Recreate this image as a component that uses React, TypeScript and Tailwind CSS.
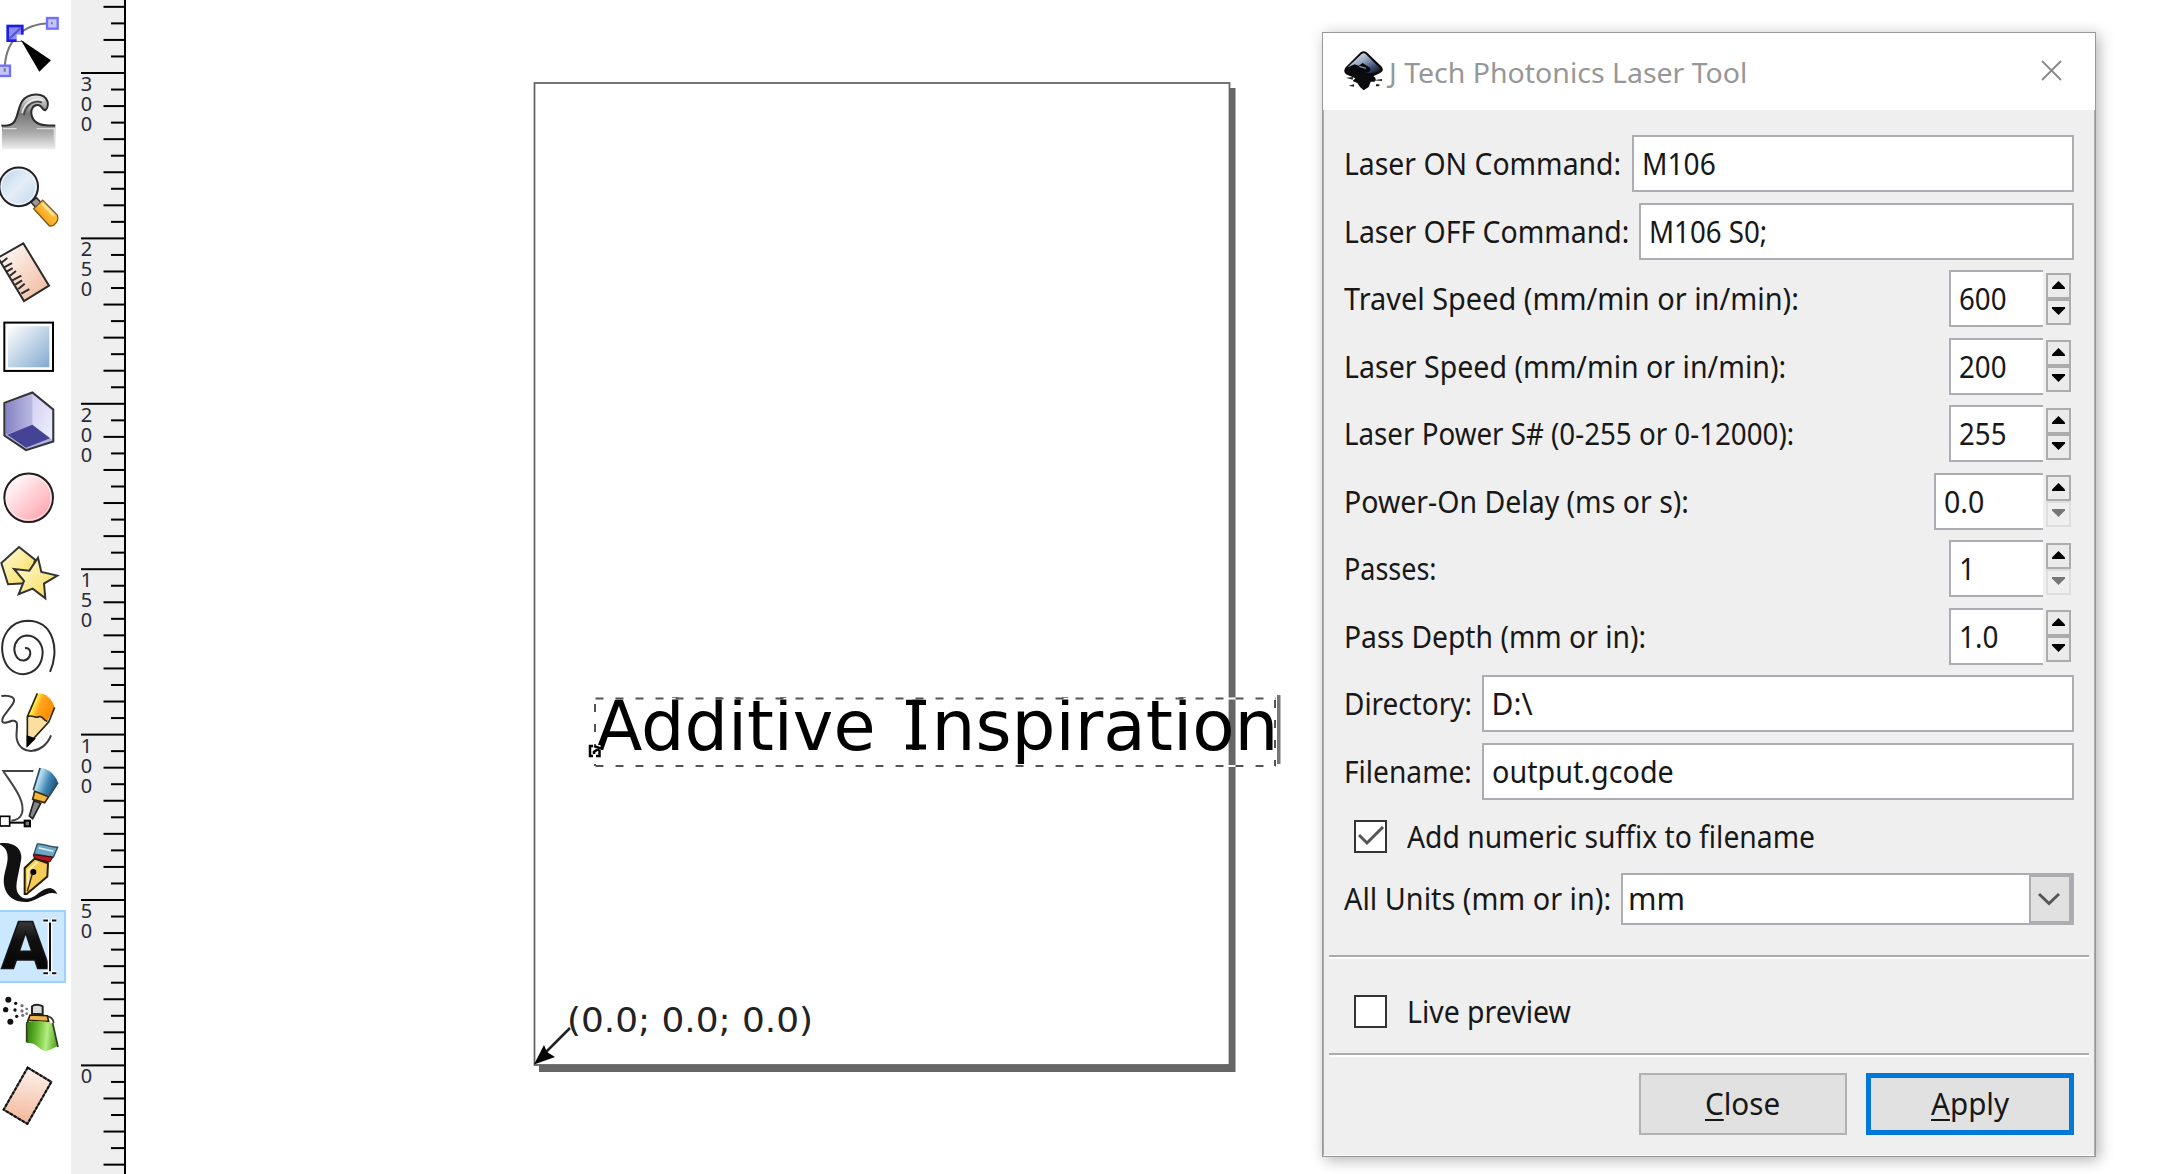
import { ReactNode, useLayoutEffect, useRef, useState } from "react";

/* Text squeezed or stretched horizontally to an exact width. */
function Fit({ w, children, className = "" }: { w: number; children: ReactNode; className?: string }) {
  const ref = useRef<HTMLSpanElement>(null);
  const [k, setK] = useState(1);
  useLayoutEffect(() => {
    if (ref.current) setK(w / ref.current.offsetWidth);
  }, [w]);
  return (
    <span className={"block shrink-0 whitespace-nowrap " + className} style={{ width: w }}>
      <span ref={ref} className="inline-block origin-left" style={{ transform: `scaleX(${k})` }}>
        {children}
      </span>
    </span>
  );
}

const icons: ReactNode[] = [
  // node editor
  <g>
    <path d="M14 212C14 128 62 70 155 70" fill="none" stroke="#777" strokeWidth="6" />
    <rect x="23" y="78" width="44" height="44" fill="#8c8cff" stroke="#1c1cea" strokeWidth="8" />
    <path d="M28 116L62 84" stroke="#5555c8" strokeWidth="6" />
    <path d="M50 124V104H72V124Z" fill="#fff" />
    <rect x="141" y="54" width="32" height="32" fill="#c4c4ff" stroke="#7070ff" strokeWidth="7" />
    <rect x="-4" y="197" width="34" height="31" fill="#c4c4ff" stroke="#7070ff" strokeWidth="7" />
    <path d="M153 70H158M14 205V215" stroke="#777" strokeWidth="6" />
    <path d="M62 119L153 181L118 215Z" fill="#000" />
  </g>,
  // tweak
  <g>
    <defs>
      <linearGradient id="wave" x1="0" y1="0" x2="0" y2="1">
        <stop offset="0" stopColor="#eee" />
        <stop offset=".35" stopColor="#777" />
        <stop offset=".7" stopColor="#aaa" />
        <stop offset="1" stopColor="#eee" />
      </linearGradient>
    </defs>
    <path d="M6 378C60 382 45 340 66 305C84 278 134 276 143 306C145 320 142 326 138 328C130 334 124 322 118 318C100 312 92 330 96 348C100 372 130 378 166 378V448H6Z" fill="url(#wave)" />
    <path d="M4 377C60 382 45 340 66 305C84 278 134 276 143 306C145 322 142 326 136 331C128 332 127 319 117 316C98 312 90 332 96 350C104 374 130 378 166 377" fill="none" stroke="#2d2d2d" strokeWidth="6" />
    <path d="M66 340C74 302 108 292 130 302" fill="none" stroke="#eee" strokeWidth="4" />
    <path d="M72 346C78 308 108 300 126 308" fill="none" stroke="#444" strokeWidth="5" />
    <path d="M9 386H50M110 386H163V440" fill="none" stroke="#ddd" strokeWidth="4" />
  </g>,
  // zoom
  <g>
    <defs>
      <linearGradient id="lens" x1="0" y1="0" x2="1" y2="1">
        <stop offset="0" stopColor="#bcd2ea" />
        <stop offset=".5" stopColor="#e4eef8" />
        <stop offset="1" stopColor="#c2d5ea" />
      </linearGradient>
      <linearGradient id="handle" x1="0" y1="1" x2="1" y2="0">
        <stop offset="0" stopColor="#d98200" />
        <stop offset=".5" stopColor="#ffb52e" />
        <stop offset="1" stopColor="#ffd56a" />
      </linearGradient>
    </defs>
    <path d="M92 606L108 624L124 610L110 594Z" fill="#999" stroke="#333" strokeWidth="5" />
    <path d="M101 627L128 601L172 646C178 662 164 682 148 678Z" fill="url(#handle)" stroke="#7a5a20" strokeWidth="4" />
    <path d="M127 612L162 648" stroke="#ffe59a" strokeWidth="8" />
    <circle cx="56" cy="561" r="58" fill="url(#lens)" stroke="#1f1f24" strokeWidth="6" />
    <circle cx="56" cy="561" r="52" fill="none" stroke="#f6f9fc" strokeWidth="3" />
  </g>,
  // measure
  <g>
    <defs>
      <linearGradient id="ruler" x1="0" y1="0" x2="1" y2="1">
        <stop offset="0" stopColor="#fff" />
        <stop offset="1" stopColor="#f2b598" />
      </linearGradient>
    </defs>
    <path d="M-6 774L70 731L147 858L72 904Z" fill="url(#ruler)" stroke="#2b2b2b" strokeWidth="6" />
    <path d="M4 789L22 775M12 803L36 790M20 816L38 805M29 829L48 814M37 842L64 828M46 855L66 842M55 868L74 852M64 882L88 868" stroke="#2b2b2b" strokeWidth="6" />
  </g>,
  // rectangle
  <g>
    <defs>
      <linearGradient id="sq" x1="0" y1="0" x2="1" y2="1">
        <stop offset="0" stopColor="#fff" />
        <stop offset="1" stopColor="#82a9cf" />
      </linearGradient>
    </defs>
    <rect x="13" y="969" width="146" height="145" fill="#fff" stroke="#000" strokeWidth="6" />
    <rect x="24" y="980" width="124" height="123" fill="url(#sq)" />
  </g>,
  // 3D box
  <g>
    <defs>
      <linearGradient id="boxl" x1="0" y1="0" x2="1" y2="0">
        <stop offset="0" stopColor="#8583c4" />
        <stop offset="1" stopColor="#bab9e2" />
      </linearGradient>
      <linearGradient id="boxr" x1="0" y1="0" x2="1" y2="1">
        <stop offset="0" stopColor="#d0cff2" />
        <stop offset="1" stopColor="#f0f0ff" />
      </linearGradient>
    </defs>
    <path d="M13 1210L97 1179L160 1230V1326L78 1352L13 1308Z" fill="#b0afdf" />
    <path d="M16 1213L97 1183V1276L16 1306Z" fill="url(#boxl)" />
    <path d="M97 1183L156 1232V1320L97 1276Z" fill="url(#boxr)" />
    <path d="M97 1276L150 1316L78 1345L22 1306Z" fill="#444394" />
    <path d="M13 1210L97 1179L160 1230V1326L78 1352L13 1308Z" fill="none" stroke="#333" strokeWidth="6" />
  </g>,
  // ellipse
  <g>
    <defs>
      <linearGradient id="disc" x1=".1" y1=".1" x2=".9" y2=".9">
        <stop offset="0" stopColor="#fff" />
        <stop offset="1" stopColor="#ffa3ad" />
      </linearGradient>
    </defs>
    <circle cx="86" cy="1492" r="73" fill="url(#disc)" stroke="#1e1e1e" strokeWidth="6" />
    <circle cx="86" cy="1492" r="67" fill="none" stroke="#ffecee" strokeWidth="3" />
  </g>,
  // star
  <g stroke="#333" strokeWidth="6">
    <defs>
      <linearGradient id="starf" x1="0" y1="0" x2="1" y2="1">
        <stop offset="0" stopColor="#fffbe0" />
        <stop offset="1" stopColor="#f7dc50" />
      </linearGradient>
    </defs>
    <path d="M57 1640L105 1678L90 1748L24 1752L4 1688Z" fill="url(#starf)" />
    <path d="M114 1672L124 1715L172 1726L132 1750L136 1794L98 1765L56 1782L72 1742L42 1706L88 1711Z" fill="url(#starf)" />
  </g>,
  // spiral
  <path
    d="M150 2015C178 1955 165 1862 82 1862C30 1864 2 1908 7 1955C12 2000 40 2022 70 2022C106 2020 128 1992 128 1955C126 1926 106 1906 80 1906C56 1908 42 1928 43 1950C46 1972 58 1982 72 1981C88 1978 94 1962 89 1950C86 1944 80 1943 75 1944"
    fill="none"
    stroke="#2b2b2b"
    strokeWidth="6"
  />,
  // pencil
  <g>
    <defs>
      <linearGradient id="pencil" x1="0" y1="0" x2="1" y2=".4">
        <stop offset="0" stopColor="#d8e000" />
        <stop offset=".35" stopColor="#fff04a" />
        <stop offset=".55" stopColor="#ffa51e" />
        <stop offset="1" stopColor="#ff8c00" />
      </linearGradient>
    </defs>
    <path d="M4 2088C30 2084 52 2092 38 2112L10 2150C-2 2176 20 2168 36 2162C62 2158 46 2190 50 2215C60 2270 132 2262 153 2206" fill="none" stroke="#3c3c3c" strokeWidth="6" />
    <path d="M82 2150L112 2080C130 2076 156 2092 163 2120L142 2164Z" fill="url(#pencil)" />
    <path d="M82 2150C100 2142 120 2150 142 2164L84 2236Z" fill="#f9dfa0" />
    <path d="M112 2080L82 2150V2236L146 2166L164 2122M82 2150C96 2142 108 2156 116 2150C130 2144 130 2164 142 2164" fill="none" stroke="#2c2410" strokeWidth="5" />
    <path d="M82 2208L104 2216L82 2238Z" fill="#000" stroke="#000" strokeWidth="4" />
  </g>,
  // bezier pen
  <g>
    <defs>
      <linearGradient id="pen" x1="0" y1="0" x2="1" y2=".4">
        <stop offset="0" stopColor="#5a9cc0" />
        <stop offset=".35" stopColor="#b8def0" />
        <stop offset=".7" stopColor="#3f86b4" />
        <stop offset="1" stopColor="#23587f" />
      </linearGradient>
    </defs>
    <path d="M100 2313H10C40 2360 76 2400 66 2440C60 2456 50 2460 34 2462" fill="none" stroke="#444" strokeWidth="6" />
    <path d="M98 2372L120 2304C140 2302 166 2322 174 2348L148 2388Z" fill="url(#pen)" />
    <path d="M120 2304L100 2370M174 2348L148 2388" stroke="#274a5e" strokeWidth="5" />
    <path d="M104 2374L146 2390L134 2408L98 2398Z" fill="#f2b83a" stroke="#3a2a10" strokeWidth="5" />
    <path d="M102 2402L122 2410L98 2456L88 2448Z" fill="#888" stroke="#222" strokeWidth="5" />
    <path d="M30 2468H72" stroke="#000" strokeWidth="6" />
    <rect x="0" y="2449" width="29" height="29" fill="#fff" stroke="#000" strokeWidth="5" />
    <rect x="74" y="2462" width="16" height="17" fill="#777" stroke="#000" strokeWidth="6" />
  </g>,
  // calligraphy
  <g>
    <path d="M0 2530C40 2524 66 2545 64 2575C56 2625 44 2655 52 2676C60 2692 72 2697 84 2696C110 2692 124 2664 150 2664C164 2668 168 2674 172 2682C140 2670 120 2700 84 2706C20 2710 4 2660 14 2620C26 2580 30 2550 0 2534Z" fill="#111" />
    <path d="M102 2562L112 2532C132 2530 150 2544 173 2542L160 2572Z" fill="#6ba6c6" stroke="#2c4a5a" strokeWidth="4" />
    <path d="M116 2544L160 2554" stroke="#d8eef8" strokeWidth="5" />
    <path d="M100 2564L158 2572L150 2586L104 2578Z" fill="#b01820" stroke="#400" strokeWidth="3" />
    <path d="M104 2576L144 2590L142 2630L80 2682H74V2604Z" fill="#f6cc58" stroke="#2a1c00" strokeWidth="6" />
    <path d="M112 2586L84 2612V2660" fill="none" stroke="#fff2bc" strokeWidth="6" />
    <path d="M98 2618L82 2674" stroke="#2a1c00" strokeWidth="4" />
    <circle cx="100" cy="2616" r="9" fill="#000" />
  </g>,
  // text
  <g>
    <defs>
      <linearGradient id="aglyph" x1="0" y1="0" x2="0" y2="1">
        <stop offset="0" stopColor="#555" />
        <stop offset=".4" stopColor="#111" />
        <stop offset="1" stopColor="#000" />
      </linearGradient>
    </defs>
    <text x="4" y="2908" fontFamily="DejaVu Sans" fontWeight="700" fontSize="193" textLength="146" lengthAdjust="spacingAndGlyphs" fill="url(#aglyph)" stroke="#151515" strokeWidth="5">A</text>
    <path d="M130 2762H146M154 2762H169M130 2920H146M154 2920H169M150 2766V2916" fill="none" stroke="#fff" strokeWidth="14" />
    <path d="M130 2762H144M156 2762H169M130 2920H144M156 2920H169M150 2768V2914" fill="none" stroke="#111" strokeWidth="6" />
  </g>,
  // spray
  <g>
    <defs>
      <linearGradient id="can" x1="0" y1="0" x2="1" y2=".1">
        <stop offset="0" stopColor="#2f7a10" />
        <stop offset=".35" stopColor="#63b52c" />
        <stop offset=".7" stopColor="#b4ee80" />
        <stop offset="1" stopColor="#5fae30" />
      </linearGradient>
    </defs>
    <g fill="#111">
      <circle cx="25" cy="3000" r="9" />
      <circle cx="17" cy="3030" r="8" />
      <circle cx="31" cy="3066" r="9" />
      <circle cx="47" cy="3011" r="5" />
      <circle cx="45" cy="3031" r="5" />
      <circle cx="50" cy="3050" r="5" />
      <g fill="#777">
        <circle cx="66" cy="3018" r="5" />
        <circle cx="66" cy="3034" r="5" />
        <circle cx="68" cy="3047" r="5" />
        <circle cx="80" cy="3028" r="4" />
        <circle cx="80" cy="3042" r="4" />
      </g>
    </g>
    <path d="M96 3042V3020C102 3014 118 3014 128 3020V3044Z" fill="#ddd" stroke="#222" strokeWidth="6" />
    <path d="M90 3046L142 3048L146 3066L84 3062Z" fill="#f0b64c" stroke="#2c2008" strokeWidth="5" />
    <path d="M82 3068C110 3060 140 3064 160 3072L172 3140C150 3150 144 3158 128 3152C112 3142 106 3128 80 3130Z" fill="url(#can)" />
    <path d="M80 3128V3070L88 3060M158 3070L174 3142" fill="none" stroke="#2d3d22" strokeWidth="5" />
    <path d="M144 3050C154 3052 160 3060 161 3070" fill="none" stroke="#333" strokeWidth="5" />
  </g>,
  // eraser
  <g>
    <defs>
      <linearGradient id="eraser" x1=".5" y1="0" x2=".4" y2="1">
        <stop offset="0" stopColor="#fdf1ec" />
        <stop offset="1" stopColor="#f3b699" />
      </linearGradient>
    </defs>
    <path d="M83 3204L154 3247L82 3373L11 3330Z" fill="url(#eraser)" stroke="#444" strokeWidth="6" />
    <path d="M83 3204L154 3247L82 3373L11 3330Z" fill="none" stroke="#111" strokeWidth="6" strokeDasharray="9 5" />
  </g>,
];

function Toolbar() {
  return (
    <div className="flex w-[71px] shrink-0 flex-col bg-white pt-[9px]">
      {icons.map((icon, i) => (
        <div
          key={i}
          className={
            i === 12
              ? "mb-[2.6px] h-[72.5px] w-[66px] border-2 border-l-0 border-[#99d1ff] bg-[#cce8ff]"
              : "h-[75.1px] w-[71px]"
          }
        >
          <svg
            className="block overflow-visible"
            width={71}
            height={75.1}
            viewBox={`0 ${27 + 225.3 * i + (i === 12 ? 6 : 0)} 213 225.3`}
          >
            {icon}
          </svg>
        </div>
      ))}
    </div>
  );
}

const majors = [300, 250, 200, 150, 100, 50, 0];

function Ruler() {
  const ticks = [];
  for (let i = -4; i <= 66; i++) {
    const y = 73 + 16.54 * i;
    const x = i % 10 === 0 ? 81 : i % 2 === 0 ? 103.5 : 111;
    ticks.push(<rect key={i} x={x} y={y - 1} width={124 - x} height={2} />);
  }
  return (
    <svg className="block shrink-0 bg-[#efefef]" width={55} height={1174} viewBox="71 0 55 1174">
      {ticks}
      <rect x="124" y="0" width="2" height="1174" />
      {majors.map((n, i) => (
        <text key={n} textAnchor="middle" fontSize="20" fontFamily="Noto Sans, sans-serif" fill="#2a2a3a">
          {String(n)
            .split("")
            .map((c, j) => (
              <tspan key={j} x="86.5" y={91 + 165.4 * i + 20 * j}>
                {c}
              </tspan>
            ))}
        </text>
      ))}
    </svg>
  );
}

function Canvas() {
  const font = "DejaVu Sans, sans-serif";
  return (
    <svg className="block shrink-0" width={1196} height={1174} viewBox="126 0 1196 1174">
      <path d="M539 1065H1229V88H1235.500V1072H539Z" fill="#666" />
      <rect x="534.500" y="83" width="695" height="982" fill="#fff" stroke="#666" strokeWidth="1.800" />
      <g fontFamily={font} fontSize="69" fill="#000">
        <text x="595.500" y="749.5" textLength="280" lengthAdjust="spacingAndGlyphs">Additive</text>
        <text x="905.500" y="749.500">I</text>
        <path d="M906 699.500H926V705H906ZM906 744.500H926V749.500H906Z" />
        <text x="931.500" y="749.500" textLength="347" lengthAdjust="spacingAndGlyphs">nspiration</text>
      </g>
      <path d="M595.500 698.500H1276M595.500 766H1276M595 704V766M1275 700V766" fill="none" stroke="#fff" strokeWidth="2" />
      <path d="M595.500 698.500H1276M595.500 766H1276M595 704V766M1275 700V766" fill="none" stroke="#555" strokeWidth="2" strokeDasharray="8 12" />
      <rect x="1277" y="695" width="3.500" height="69" fill="#777" />
      <rect x="588.500" y="745" width="12" height="12" fill="#fff" />
      <path d="M593 746H590V756H593M596 756H599.500V750M594 746L599.500 748L594 752V754" fill="none" stroke="#000" strokeWidth="2.500" />
      <text x="567" y="1031.500" fontFamily={font} fontSize="34" fill="#222" textLength="246" lengthAdjust="spacingAndGlyphs">(0.0; 0.0; 0.0)</text>
      <path d="M570 1028L546 1052" stroke="#222" strokeWidth="2.500" />
      <path d="M534 1064.500L544 1045L547 1052L555 1057Z" fill="#000" />
    </svg>
  );
}

function Entry({ label, lw, value, vw, gap }: { label: string; lw: number; value: string; vw: number; gap: number }) {
  return (
    <div className="flex h-[57px] items-center">
      <Fit w={lw} className="pt-px">{label}</Fit>
      <div className="flex h-full flex-1 items-center border-2 border-[#acacb2] bg-white pt-px pl-[8px]" style={{ marginLeft: gap }}>
        <Fit w={vw}>{value}</Fit>
      </div>
    </div>
  );
}

function StepButton({ up, off }: { up?: boolean; off?: boolean }) {
  return (
    <div
      className={
        "flex h-[26px] w-[25px] items-center justify-center border-2 " +
        (off ? "border-[#dedede] bg-[#efefef]" : "border-[#acacac] bg-[#ebebeb]")
      }
    >
      <svg className="-mt-[2px]" width="13" height="8" viewBox="0 0 13 8">
        <path d={up ? "M0 8H13V6.500L6.500 0L0 6.500Z" : "M0 0H13V1.500L6.500 8L0 1.500Z"} fill={off ? "#777" : "#000"} />
      </svg>
    </div>
  );
}

function Spin({ label, lw, value, vw, wide, min }: { label: string; lw: number; value: string; vw: number; wide?: boolean; min?: boolean }) {
  return (
    <div className="flex h-[57px] items-center pr-[2.500px]">
      <Fit w={lw} className="pt-px">{label}</Fit>
      <div
        className={
          "ml-auto flex h-full items-center border-2 border-r-0 border-[#acacb2] bg-white pt-px pl-[8px] " +
          (wide ? "w-[109px]" : "w-[94px]")
        }
      >
        <Fit w={vw}>{value}</Fit>
      </div>
      <div className="ml-[3px] flex flex-col">
        <StepButton up />
        <StepButton off={min} />
      </div>
    </div>
  );
}

function Check({ label, w, on }: { label: string; w: number; on?: boolean }) {
  return (
    <div className="flex h-[33px] items-center pl-[10px]">
      <div className="mr-[20px] flex h-[33px] w-[33px] items-center justify-center border-[2.500px] border-[#333] bg-white">
        {on && (
          <svg width="26" height="20" viewBox="0 0 26 20">
            <path d="M1 9L9 17L25 1" fill="none" stroke="#555" strokeWidth="3" />
          </svg>
        )}
      </div>
      <Fit w={w} className="pt-px">{label}</Fit>
    </div>
  );
}

function Rule() {
  return <div className="-mr-[15.500px] -ml-[15px] h-1 border-t-2 border-b-2 border-t-[#acacac] border-b-white" />;
}

function InkLogo() {
  return (
    <svg width="40" height="40" viewBox="0 0 120 120">
      <defs>
        <linearGradient id="ink" x1="0" y1="0" x2="1" y2="1">
          <stop offset="0" stopColor="#fff" />
          <stop offset=".45" stopColor="#93a2bd" />
          <stop offset=".75" stopColor="#33496f" />
          <stop offset="1" stopColor="#111" />
        </linearGradient>
      </defs>
      <path d="M50 4Q59 -3 68 4L112 46Q124 60 104 68L88 76Q100 82 92 92H80L74 108L59 118L48 108L40 96L26 90L34 82L6 70Q-6 58 8 46Z" fill="#0b0b0e" />
      <path d="M53 9Q59 4 65 9L108 52Q110 60 96 64Q60 70 34 58Q20 50 12 48Z" fill="url(#ink)" />
      <path d="M8 50L32 40L44 44L56 36L78 50Q84 64 60 66L24 66Z" fill="#08080b" />
      <path d="M46 46L66 52" stroke="#8c94a0" strokeWidth="4" />
      <path d="M6 80L28 78L26 86ZM88 88L114 84V90ZM14 104L30 100V107ZM96 100H106V106H96Z" fill="#222" />
    </svg>
  );
}

function Dialog() {
  return (
    <div className="mt-8 flex h-[1125px] w-[774px] shrink-0 flex-col border border-[#999] bg-[#efefef] font-['Noto_Sans',sans-serif] text-[30px] leading-none text-[#181818] shadow-[3px_3px_14px_rgba(0,0,0,0.3)]">
      <div className="flex h-[77px] shrink-0 items-center bg-white pr-[33px] pl-[21px] text-[28px] text-[#979797]">
        <div className="-mt-[2px]">
          <InkLogo />
        </div>
        <Fit w={358} className="ml-[5px]">J Tech Photonics Laser Tool</Fit>
        <svg className="-mt-[3px] ml-auto" width="21" height="21" viewBox="0 0 21 21">
          <path d="M1 1L20 20M20 1L1 20" stroke="#888" strokeWidth="1.800" />
        </svg>
      </div>
      <div className="flex flex-1 flex-col border-x border-b border-x-[#aaa] border-b-white pt-[25px] pr-[20.500px] pl-[20px]">
        <div className="flex flex-col gap-[10.500px]">
          <Entry label="Laser ON Command:" lw={277} gap={10.5} value="M106" vw={74} />
          <Entry label="Laser OFF Command:" lw={285} gap={10} value="M106 S0;" vw={118} />
          <Spin label="Travel Speed (mm/min or in/min):" lw={455} value="600" vw={47} />
          <Spin label="Laser Speed (mm/min or in/min):" lw={442.5} value="200" vw={47} />
          <Spin label="Laser Power S# (0-255 or 0-12000):" lw={450} value="255" vw={47} />
          <Spin label="Power-On Delay (ms or s):" lw={344.5} value="0.0" vw={40} wide min />
          <Spin label="Passes:" lw={92.5} value="1" vw={16} min />
          <Spin label="Pass Depth (mm or in):" lw={302.5} value="1.0" vw={39} />
          <Entry label="Directory:" lw={127.5} gap={10} value="D:\" vw={41} />
          <Entry label="Filename:" lw={127.5} gap={10} value="output.gcode" vw={182} />
        </div>
        <div className="mt-[20px]">
          <Check label="Add numeric suffix to filename" w={408} on />
        </div>
        <div className="mt-[20px] flex h-[52px] items-center">
          <Fit w={267} className="pt-px">All Units (mm or in):</Fit>
          <div className="ml-[10px] flex h-full flex-1 items-center justify-between border-2 border-[#acacb2] bg-white pl-[5px]">
            <Fit w={57} className="pt-px">mm</Fit>
            <div className="flex h-full w-[43px] items-center justify-center border-2 border-r-[3px] border-[#acacb2] bg-[#e1e1e1] pr-px">
              <svg width="22" height="14" viewBox="0 0 22 14">
                <path d="M1 2L11 11.500L21 2" fill="none" stroke="#555" strokeWidth="3" />
              </svg>
            </div>
          </div>
        </div>
        <div className="mt-[30px]">
          <Rule />
        </div>
        <div className="mt-[36px]">
          <Check label="Live preview" w={164} />
        </div>
        <div className="mt-[25px]">
          <Rule />
        </div>
        <div className="mt-[16px] flex h-[62px] justify-end gap-[19.500px]">
          <div className="flex w-[207.500px] items-center justify-center border-2 border-[#b2b2b2] bg-[#e1e1e1]">
            <Fit w={75} className="pt-px">
              <span className="underline decoration-2 underline-offset-4">C</span>lose
            </Fit>
          </div>
          <div className="flex w-[207.500px] items-center justify-center border-[5px] border-[#0078d7] bg-[#e1e1e1]">
            <Fit w={78} className="pt-px">
              <span className="underline decoration-2 underline-offset-4">A</span>pply
            </Fit>
          </div>
        </div>
      </div>
    </div>
  );
}

export default function App() {
  return (
    <div className="flex h-[1174px] w-[2183px] overflow-hidden bg-white">
      <Toolbar />
      <Ruler />
      <Canvas />
      <Dialog />
    </div>
  );
}
